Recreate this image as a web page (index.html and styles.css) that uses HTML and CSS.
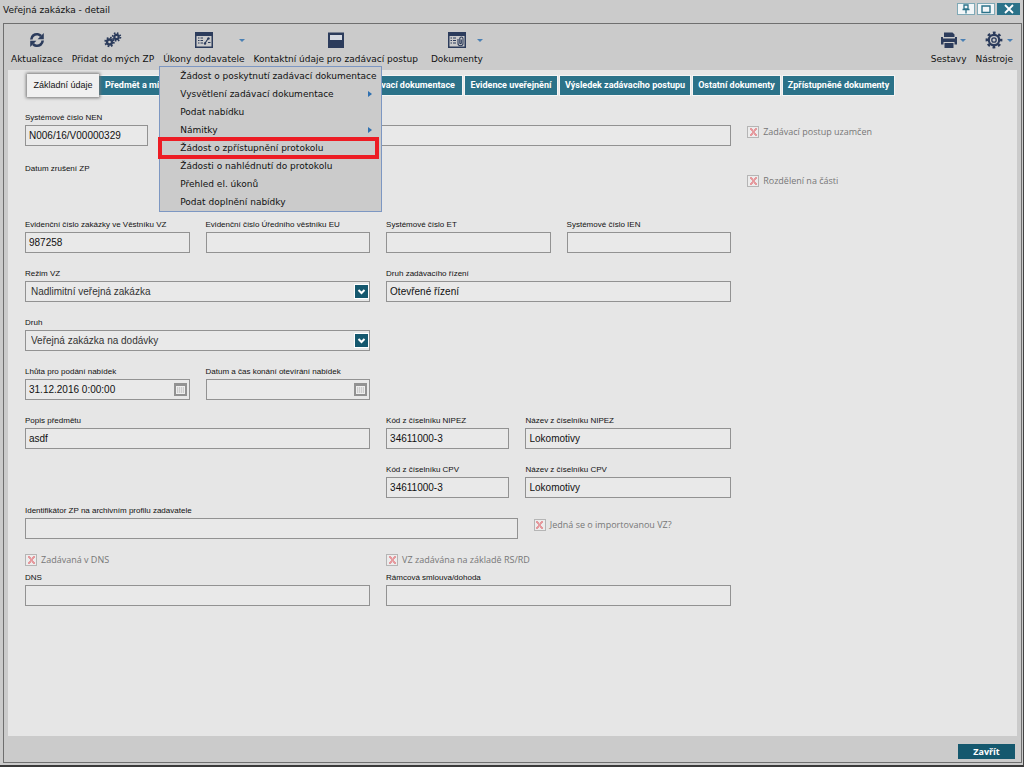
FILE: index.html
```html
<!DOCTYPE html>
<html lang="cs">
<head>
<meta charset="utf-8">
<title>Veřejná zakázka - detail</title>
<link rel="stylesheet" href="styles.css">
</head>
<body>
<div class="window">
  <header class="titlebar">
    <h1 class="titlebar-text">Veřejná zakázka - detail</h1>
    <div class="window-buttons">
      <button class="window-button" aria-label="Připnout"><svg width="10" height="10" viewBox="0 0 10 10" fill="none" stroke="#2b7289" stroke-width="1.3"><path d="M3 1h4v4H3zM1.500 5.500h7M5 5.500V9.500"/></svg></button>
      <button class="window-button" aria-label="Maximalizovat"><svg width="10" height="10" viewBox="0 0 10 10" fill="none" stroke="#2b7289" stroke-width="1.4"><path d="M1 2h8v6.500H1z"/></svg></button>
      <button class="window-button window-button-close" aria-label="Zavřít okno"><svg width="10" height="10" viewBox="0 0 10 10" fill="none" stroke="#fff" stroke-width="1.8"><path d="M1 1l8 8M9 1L1 9"/></svg></button>
    </div>
  </header>
  <div class="frame">
    <nav class="toolbar">
      <button class="tool">
        <svg class="tool-icon" width="18" height="18" viewBox="0 0 18 18" fill="none" stroke="#2c3c5c" stroke-width="2.600"><path d="M3.300 8.500C3.500 5 6.500 2.800 9.800 3.300c1.500.2 2.500 1 3.200 1.700M14.700 9.500c-.2 3.500-3.200 5.700-6.500 5.200-1.500-.2-2.500-1-3.200-1.700"/><path fill="#2c3c5c" stroke="none" d="M15.800 2v6.200H9.600zM2.200 16V9.800h6.200z"/></svg>
        <span>Aktualizace</span>
      </button>
      <button class="tool">
        <svg class="tool-icon" width="18" height="18" viewBox="0 0 18 18" fill="none" stroke="#2c3c5c"><circle cx="5.500" cy="11" r="2.500" stroke-width="2.400"/><circle cx="5.500" cy="11" r="4.300" stroke-width="1.800" stroke-dasharray="1.700 1.680"/><circle cx="12.500" cy="6" r="2.200" stroke-width="2.200"/><circle cx="12.500" cy="6" r="3.900" stroke-width="1.800" stroke-dasharray="1.530 1.530"/></svg>
        <span>Přidat do mých ZP</span>
      </button>
      <div class="tool-group">
        <button class="tool" aria-haspopup="menu" aria-expanded="true">
          <svg class="tool-icon" width="20" height="18" viewBox="0 0 20 18"><path fill="#2c3c5c" fill-rule="evenodd" d="M1 1h18v16H1zM2.500 5v10.500h15V5z"/><path stroke="#2c3c5c" stroke-width="1.200" fill="none" d="M4 7h1.500M6.500 7H9M4 9.500h1.500M6.500 9.500H9M4 12h1.500M6.500 12H9M10.500 13l4-6M14 11.500h2.500"/><circle cx="11" cy="12.500" r="1.200" fill="#2c3c5c"/><circle cx="14.500" cy="7.500" r="1.200" fill="#2c3c5c"/></svg>
          <span>Úkony dodavatele</span>
          <span class="tool-arrow"></span>
        </button>
        <ul class="menu" role="menu">
          <li><button class="menu-item" role="menuitem">Žádost o poskytnutí zadávací dokumentace</button></li>
          <li><button class="menu-item menu-item-parent" role="menuitem">Vysvětlení zadávací dokumentace</button></li>
          <li><button class="menu-item" role="menuitem">Podat nabídku</button></li>
          <li><button class="menu-item menu-item-parent" role="menuitem">Námitky</button></li>
          <li><button class="menu-item menu-item-marked" role="menuitem">Žádost o zpřístupnění protokolu</button></li>
          <li><button class="menu-item" role="menuitem">Žádosti o nahlédnutí do protokolu</button></li>
          <li><button class="menu-item" role="menuitem">Přehled el. úkonů</button></li>
          <li><button class="menu-item" role="menuitem">Podat doplnění nabídky</button></li>
        </ul>
      </div>
      <button class="tool">
        <svg class="tool-icon" width="18" height="18" viewBox="0 0 18 18"><path fill="#2c3c5c" d="M1 1.500h16v15.500H1z"/><path fill="#d6dae2" d="M3 4h12v5H3z"/></svg>
        <span>Kontaktní údaje pro zadávací postup</span>
      </button>
      <button class="tool tool-spaced">
        <svg class="tool-icon" width="20" height="18" viewBox="0 0 20 18"><path fill="#2c3c5c" fill-rule="evenodd" d="M1 1h18v16H1zM2.500 5v10.500h15V5z"/><path stroke="#2c3c5c" stroke-width="1.200" fill="none" d="M3.500 7H5M6 7h3M3.500 9.500H5M6 9.500h3M3.500 12H5M6 12h3"/><path stroke="#2c3c5c" stroke-width="1.100" fill="none" d="M11 8v4.500c0 3 5 3 5 0V7.500c0-2-3.200-2-3.200 0V12c0 1 1.500 1 1.500 0V8.500"/></svg>
        <span>Dokumenty</span>
        <span class="tool-arrow"></span>
      </button>
      <div class="toolbar-end">
        <button class="tool">
          <svg class="tool-icon" width="18" height="18" viewBox="0 0 18 18"><path fill="#2c3c5c" fill-rule="evenodd" d="M4 1.500h8.500L14.500 3.500V6H4zM1 6h2v1.500h12V6h2v7.500h-2.500V11h-11v2.500H1zM4.500 12h9v5h-9z"/></svg>
          <span>Sestavy</span>
          <span class="tool-arrow"></span>
        </button>
        <button class="tool">
          <svg class="tool-icon" width="18" height="18" viewBox="0 0 18 18" fill="none" stroke="#2c3c5c"><circle cx="9" cy="9" r="5.200" stroke-width="2.200"/><circle cx="9" cy="9" r="7.200" stroke-width="2.400" stroke-dasharray="2.800 2.855" stroke-dashoffset="1.400"/><circle cx="9" cy="9" r="2.200" stroke-width="1.300"/></svg>
          <span>Nástroje</span>
          <span class="tool-arrow"></span>
        </button>
      </div>
    </nav>
    <main class="panel">
      <div class="tabs" role="tablist">
        <button class="tab tab-active" role="tab" aria-selected="true">Základní údaje</button>
        <button class="tab tab-start" role="tab">Předmět a místo plnění</button>
        <button class="tab" role="tab">Zadávací dokumentace</button>
        <button class="tab" role="tab">Evidence uveřejnění</button>
        <button class="tab" role="tab">Výsledek zadávacího postupu</button>
        <button class="tab" role="tab">Ostatní dokumenty</button>
        <button class="tab" role="tab">Zpřístupněné dokumenty</button>
      </div>
      <form class="form">
        <div class="row">
          <div class="split split-number span-4">
            <label class="field"><span class="label">Systémové číslo NEN</span><input class="input" readonly value="N006/16/V00000329"></label>
            <div class="field field-end"><input class="input" readonly aria-label="Název"></div>
          </div>
          <label class="check check-side"><input type="checkbox" class="box" disabled>Zadávací postup uzamčen</label>
        </div>
        <div class="row row-tall">
          <span class="label label-low span-4">Datum zrušení ZP</span>
          <label class="check check-side"><input type="checkbox" class="box" disabled>Rozdělení na části</label>
        </div>
        <div class="row">
          <label class="field"><span class="label">Evidenční číslo zakázky ve Věstníku VZ</span><input class="input" readonly value="987258"></label>
          <label class="field"><span class="label">Evidenční číslo Úředního věstníku EU</span><input class="input" readonly></label>
          <label class="field"><span class="label">Systémové číslo ET</span><input class="input" readonly></label>
          <label class="field"><span class="label">Systémové číslo IEN</span><input class="input" readonly></label>
        </div>
        <div class="row">
          <label class="field span-2"><span class="label">Režim VZ</span>
            <span class="control"><select class="input select"><option>Nadlimitní veřejná zakázka</option></select><svg class="select-arrow" width="13" height="13" viewBox="0 0 13 13"><path fill="#15586e" d="M0 0h13v13H0z"/><path fill="none" stroke="#fff" stroke-width="2" d="M3.500 5l3 3 3-3"/></svg></span></label>
          <label class="field span-2"><span class="label">Druh zadávacího řízení</span><input class="input" readonly value="Otevřené řízení"></label>
        </div>
        <div class="row">
          <label class="field span-2"><span class="label">Druh</span>
            <span class="control"><select class="input select"><option>Veřejná zakázka na dodávky</option></select><svg class="select-arrow" width="13" height="13" viewBox="0 0 13 13"><path fill="#15586e" d="M0 0h13v13H0z"/><path fill="none" stroke="#fff" stroke-width="2" d="M3.500 5l3 3 3-3"/></svg></span></label>
        </div>
        <div class="row">
          <div class="field"><label class="label" for="deadline">Lhůta pro podání nabídek</label>
            <span class="control"><input class="input" id="deadline" readonly value="31.12.2016 0:00:00"><button type="button" class="calendar" aria-label="Vybrat datum"></button></span></div>
          <div class="field"><label class="label" for="opening">Datum a čas konání otevírání nabídek</label>
            <span class="control"><input class="input" id="opening" readonly><button type="button" class="calendar" aria-label="Vybrat datum"></button></span></div>
        </div>
        <div class="row">
          <label class="field span-2"><span class="label">Popis předmětu</span><input class="input" readonly value="asdf"></label>
          <div class="split split-code span-2">
            <label class="field"><span class="label">Kód z číselníku NIPEZ</span><input class="input" readonly value="34611000-3"></label>
            <label class="field"><span class="label">Název z číselníku NIPEZ</span><input class="input" readonly value="Lokomotivy"></label>
          </div>
        </div>
        <div class="row row-close">
          <div class="split split-code second-half">
            <label class="field"><span class="label">Kód z číselníku CPV</span><input class="input" readonly value="34611000-3"></label>
            <label class="field"><span class="label">Název z číselníku CPV</span><input class="input" readonly value="Lokomotivy"></label>
          </div>
        </div>
        <div class="row">
          <div class="split split-profile span-4">
            <label class="field"><span class="label">Identifikátor ZP na archivním profilu zadavatele</span><input class="input" readonly></label>
            <label class="check check-side"><input type="checkbox" class="box" disabled>Jedná se o importovanou VZ?</label>
          </div>
        </div>
        <div class="row row-checks">
          <label class="check span-2"><input type="checkbox" class="box" disabled>Zadávaná v DNS</label>
          <label class="check span-2"><input type="checkbox" class="box" disabled>VZ zadávána na základě RS/RD</label>
        </div>
        <div class="row">
          <label class="field span-2"><span class="label">DNS</span><input class="input" readonly></label>
          <label class="field span-2"><span class="label">Rámcová smlouva/dohoda</span><input class="input" readonly></label>
        </div>
      </form>
    </main>
    <footer class="footer"><button class="close-button">Zavřít</button></footer>
  </div>
</div>
</body>
</html>
```
FILE: styles.css
```css
* { box-sizing: border-box; }
body {
  margin: 0;
  color: #111;
  background: #cbcbcb;
  font: 9px/14px "DejaVu Sans", sans-serif;
}
button, input, select { font: inherit; color: inherit; margin: 0; }
button { border: 0; padding: 0; background: none; }

.window {
  display: flex;
  flex-direction: column;
  min-height: 100vh;
  padding: 0 1px 2px 3px;
  border-right: 1px solid #444;
  border-bottom: 2px solid #3a3a3a;
}
.titlebar {
  display: flex;
  justify-content: space-between;
  align-items: flex-start;
  height: 23px;
  padding-top: 2px;
}
.titlebar-text { margin: 0; padding-top: 1px; font-size: 9px; font-weight: 400; }
.window-buttons { display: flex; gap: 2px; padding: 1px 2px 0 0; }
.window-button {
  display: grid;
  place-items: center;
  width: 18px;
  height: 12px;
  background: #f2f6f8;
  border: 1px solid #7fa9b6;
}
.window-button-close { width: 23px; background: #2b7289; border-color: #2b7289; }

.frame {
  flex: 1;
  display: flex;
  flex-direction: column;
  padding: 0 4px;
  border: 1px solid #6f6f6f;
}
.toolbar { display: flex; gap: 9px; padding: 7px 4px 4px 3px; }
.tool-group { position: relative; }
.tool {
  position: relative;
  display: flex;
  flex-direction: column;
  align-items: center;
  gap: 3px;
  white-space: nowrap;
}
.tool-spaced { margin-left: 4px; }
.tool-icon { display: block; }
.tool-arrow {
  position: absolute;
  top: 8px;
  right: 0;
  border: 3px solid transparent;
  border-top-color: #4a80b4;
  border-bottom: 0;
}
.toolbar-end { display: flex; gap: 9px; margin-left: auto; }

.menu {
  position: absolute;
  z-index: 2;
  top: 35px;
  left: -4px;
  width: 223px;
  margin: 0;
  padding: 0;
  list-style: none;
  background: #cbcbcb;
  border: 1px solid #7d97c2;
}
.menu-item {
  position: relative;
  display: block;
  width: 100%;
  height: 18px;
  padding-left: 20px;
  text-align: left;
  white-space: nowrap;
}
.menu-item-parent::after {
  content: "";
  position: absolute;
  top: 6px;
  right: 9px;
  border: 3px solid transparent;
  border-left: 4px solid #2f70b0;
  border-right: 0;
}
.menu-item-marked::before {
  content: "";
  position: absolute;
  inset: -2px 2px -2px -2px;
  border: 4px solid #ed1c24;
}

.panel { flex: 1; background: #e6e6e6; }
.tabs {
  display: grid;
  grid-template-columns: 72px 249px 108px 92px 130px 87px 111px;
  column-gap: 3px;
  align-items: center;
  padding: 4px 0 0 19px;
}
.tab {
  height: 19px;
  color: #fff;
  background: #2b7289;
  font: 700 9px/19px Roboto, "Liberation Sans", sans-serif;
  white-space: nowrap;
  outline: 1px solid #f4f4f4;
}
.tab-active {
  z-index: 1;
  height: 23px;
  color: #111;
  background: #f0f0f0;
  font: 9px/23px "Liberation Sans", sans-serif;
  outline: 0;
  box-shadow: 0 0 3px 1px #777;
}
.tab-start { margin-left: -3px; padding-left: 6px; text-align: left; }

.form { padding: 14px 14px 20px 17px; }
.row {
  display: grid;
  grid-template-columns: repeat(4, 164fr) 255fr;
  column-gap: 16px;
  margin-bottom: 14px;
}
.row-tall { min-height: 44px; }
.row-close { margin-bottom: 6px; }
.row-checks { margin-bottom: 4px; }
.span-2 { grid-column: span 2; }
.span-4 { grid-column: span 4; }
.second-half { grid-column: 3 / span 2; }
.split { display: grid; column-gap: 16px; }
.split-number { grid-template-columns: 123fr 566fr; }
.split-code { grid-template-columns: 123fr 205fr; }
.split-profile { grid-template-columns: 492fr 197fr; }
.field { display: flex; flex-direction: column; min-width: 0; }
.field-end { justify-content: flex-end; }
.label {
  display: block;
  font: 8px/14px "Liberation Sans", sans-serif;
  white-space: nowrap;
}
.label-low { padding-top: 2px; }
.control { position: relative; display: block; }
.input {
  display: block;
  width: 100%;
  height: 21px;
  padding: 0 3px;
  color: #111;
  background: #e9e9e9;
  border: 1px solid #929292;
  border-radius: 0;
  font: 10px/19px "Liberation Sans", sans-serif;
}
.select { appearance: none; padding-left: 5px; color: #333; }
.select-arrow {
  position: absolute;
  top: 4px;
  right: 2px;
  outline: 1px solid #fff;
  pointer-events: none;
}
.calendar {
  position: absolute;
  top: 4px;
  right: 3px;
  width: 13px;
  height: 13px;
  background: repeating-linear-gradient(90deg, #e4e4e4 0 1px, #ccc 1px 2px);
  border: 3px solid #929292;
  border-width: 3px 2px 2px;
  box-shadow: inset 0 0 0 1px #eee;
}
.check {
  display: flex;
  align-items: center;
  gap: 4px;
  height: 14px;
  color: #777;
  font: 9px/14px "Open Sans", sans-serif;
  white-space: nowrap;
}
.check-side { margin-top: 14px; }
.box {
  appearance: none;
  flex: none;
  width: 12px;
  height: 12px;
  border: 1px solid #b5b5b5;
  background:
    linear-gradient(50deg, transparent 40%, #e59a9e 42% 58%, transparent 60%) center / 7px 8px no-repeat,
    linear-gradient(130deg, transparent 40%, #e59a9e 42% 58%, transparent 60%) center / 7px 8px no-repeat,
    #ececec;
}

.footer { display: flex; justify-content: flex-end; padding: 8px 2px 3px 0; }
.close-button {
  width: 57px;
  height: 15px;
  color: #fff;
  background: #15586e;
  font: 700 9px/15px "Open Sans", sans-serif;
}
```
